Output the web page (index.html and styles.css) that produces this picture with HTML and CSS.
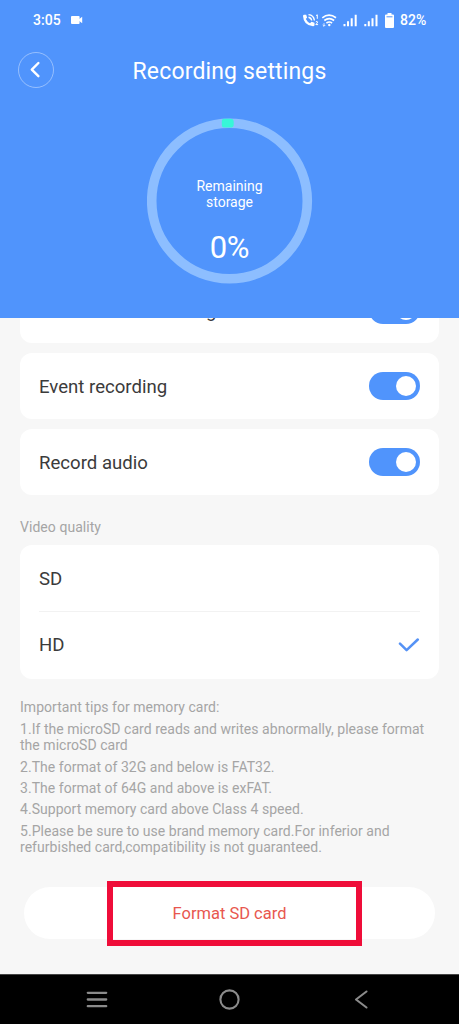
FILE: index.html
```html
<!DOCTYPE html>
<html lang="en">
<head>
<meta charset="utf-8">
<title>Recording settings</title>
<link rel="stylesheet" href="styles.css">
</head>
<body>
<div class="screen">
  <header class="header">
    <div class="status">
      <span class="clock">3:05</span>
      <svg class="cam" width="12" height="8" viewBox="0 0 12 8"><rect width="8.600" height="8" rx="1" fill="#fff"/><path d="M8 3.200L11.200 .8V7.200L8 4.800z" fill="#fff"/></svg>
      <svg class="signals" width="94" height="18" viewBox="0 0 94 18" fill="none" stroke="#fff">
        <path d="M1.900 3.700h2.300l.9 2.900-1.300 1.500q1.500 3 4.200 4.100l1.500-1.400 3 1v2.400q-.2 1.100-1.500 1.100Q1.500 14.300 1 5q0-1.100.9-1.300z" fill="#fff" stroke="none"/>
        <path d="M6.500 6.200q2.800.5 3.200 3.300M6.500 3.600q5.300.5 5.900 5.900" stroke-width="1.400"/>
        <path d="M14 4.600l1.300-.8v4M13.800 10.900q1.700-1.100 1.800.1 0 .8-1.800 2.600h2.300" stroke-width="1"/>
        <path d="M20.300 6.800q6.700-5.200 13.700 0M22.300 9.500q4.900-3.600 9.800 0M24.400 12.100q2.900-2.200 5.700 0" stroke-width="1.700"/>
        <circle cx="27.300" cy="14" r="1.200" fill="#fff" stroke="none"/>
        <path d="M22 12.200v3M20.700 14l1.300 1.300 1.300-1.300" stroke-width=".8"/>
        <path d="M42.500 15.300v-2.400M46 15.300v-5M49.700 15.300v-8M53.700 15.300V3.800M63.300 15.300v-2.400M66.800 15.300v-5M70.500 15.300v-8M74.500 15.300V3.800" stroke-width="2"/>
        <path d="M85.500 2h4v1.500h1.500q1 0 1 1V16q0 1-1 1h-7q-1 0-1-1V4.500q0-1 1-1h1.500z" fill="#fff" stroke="none"/>
        <path d="M84.500 5.800h6" stroke="#5094fc" stroke-width="1"/>
      </svg>
      <span class="battery">82%</span>
    </div>
    <div class="titlebar">
      <div class="back"><svg width="36" height="36" viewBox="0 0 36 36" fill="none" stroke="#fff"><circle cx="18" cy="18" r="17.500" stroke-opacity=".4"/><path d="M20.400 11L13.800 17.600l6.600 6.600" stroke-width="2.400" stroke-linecap="round" stroke-linejoin="round"/></svg></div>
      <h1 class="title">Recording settings</h1>
    </div>
    <div class="gauge">
      <svg class="ring" width="166" height="166" viewBox="0 0 166 166" fill="none"><circle cx="82.500" cy="83" r="77.800" stroke="#8dbeff" stroke-width="9.600"/><path d="M77 .8h6.700q3 0 3 3v3q0 2.800-3 2.800H77q-2.200 0-2.200-2.500V3.500q0-2.700 2.200-2.700z" fill="#37f6d8"/></svg>
      <div class="gauge-text">
        <div class="remaining">Remaining<br>storage</div>
        <div class="percent">0%</div>
      </div>
    </div>
  </header>
  <main class="content">
    <div class="cards">
      <div class="card"><span class="label">Continuous recording</span><span class="toggle"></span></div>
      <div class="card"><span class="label">Event recording</span><span class="toggle"></span></div>
      <div class="card"><span class="label">Record audio</span><span class="toggle"></span></div>
    </div>
    <h2 class="section">Video quality</h2>
    <div class="quality">
      <div class="option"><span class="label">SD</span></div>
      <div class="option"><span class="label">HD</span><svg width="22" height="14" viewBox="0 0 22 14" fill="none" stroke="#5592f5" stroke-width="2.500" stroke-linecap="round" stroke-linejoin="round"><path d="M2 5.700l6.600 6.500L19.800 1.500"/></svg></div>
    </div>
    <div class="tips">
      <p>Important tips for memory card:</p>
      <p>1.If the microSD card reads and writes abnormally, please format<br>the microSD card</p>
      <p>2.The format of 32G and below is FAT32.</p>
      <p>3.The format of 64G and above is exFAT.</p>
      <p>4.Support memory card above Class 4 speed.</p>
      <p>5.Please be sure to use brand memory card.For inferior and<br>refurbished card,compatibility is not guaranteed.</p>
    </div>
    <div class="format"><span>Format SD card</span><div class="highlight"></div></div>
  </main>
  <nav class="nav">
    <svg width="22" height="22" viewBox="0 0 22 22" stroke="#8b8b8b" stroke-width="2.300" stroke-linecap="round"><path d="M1.800 3.800h18.400M1.800 10.500h18.400M1.800 17.200h18.400"/></svg>
    <svg width="22" height="22" viewBox="0 0 22 22" fill="none" stroke="#8b8b8b" stroke-width="2.100"><circle cx="11.500" cy="10.500" r="9.100"/></svg>
    <svg width="22" height="22" viewBox="0 0 22 22" fill="none" stroke="#8b8b8b" stroke-width="2.100" stroke-linecap="round" stroke-linejoin="round"><path d="M16.500 2.500L6 10.500l10.500 8"/></svg>
  </nav>
</div>
</body>
</html>
```
FILE: styles.css
```css
* { box-sizing: border-box; margin: 0; padding: 0; }
body { font-family: Roboto, sans-serif; background: #f7f7f7; }
svg { display: block; flex: none; }
.screen { width: 459px; height: 1024px; display: flex; flex-direction: column; overflow: hidden; white-space: nowrap; }
.header { height: 318px; flex: none; background: #5094fc; color: #fff; display: flex; flex-direction: column; }
.status { height: 38px; padding: 1px 32px 0 33px; display: flex; align-items: center; font-size: 14px; font-weight: 500; }
.clock { width: 38px; letter-spacing: .05px; }
.signals { margin-left: auto; }
.battery { margin-left: 4px; width: 27px; }
.titlebar { height: 64px; padding: 14px 18px 0; display: grid; grid-template-columns: 36px 1fr 36px; align-items: start; }
.title { font-size: 23px; font-weight: 400; line-height: 28px; padding-top: 6px; text-align: center; letter-spacing: .15px; }
.gauge { margin: 16px auto 0; width: 166px; height: 166px; display: grid; }
.ring, .gauge-text { grid-area: 1 / 1; }
.gauge-text { padding-top: 60px; text-align: center; }
.remaining { font-size: 14px; line-height: 16.400px; }
.percent { font-size: 31px; line-height: 36px; margin-top: 19px; letter-spacing: -.3px; }
.content { height: 656px; flex: none; overflow: hidden; padding: 0 20px; }
.cards { margin-top: -41px; display: flex; flex-direction: column; gap: 9.400px; }
.card { height: 66.400px; flex: none; background: #fff; border-radius: 12px; padding: 0 19px; display: flex; align-items: center; justify-content: space-between; }
.label { font-size: 18.600px; line-height: 24px; color: #3b3b3b; padding-top: 2px; }
.toggle { width: 51px; height: 28px; border-radius: 14px; background: #5094fc; padding: 4px; display: flex; justify-content: flex-end; }
.toggle::before { content: ""; width: 20px; height: 20px; border-radius: 50%; background: #fff; }
.section { margin-top: 24px; font-size: 14px; font-weight: 400; line-height: 16px; color: #a5a5a5; letter-spacing: .05px; }
.quality { margin-top: 10px; height: 134px; background: #fff; border-radius: 12px; padding: 0 19px; }
.option { height: 66px; display: flex; align-items: center; justify-content: space-between; }
.option + .option { height: 68px; border-top: 1px solid #f2f2f2; }
.option + .option .label { padding-top: 0; }
.tips { margin-top: 20.500px; display: flex; flex-direction: column; gap: 5px; font-size: 14px; line-height: 16.400px; color: #a5a5a5; letter-spacing: .035px; }
.format { position: relative; margin: 31px 4px 0; height: 52px; border-radius: 26px; background: #fff; display: flex; align-items: center; justify-content: center; font-size: 16.500px; color: #e8574f; }
.format span { padding-top: 1px; }
.highlight { position: absolute; left: 83px; top: -6px; width: 255px; height: 65px; border: 6px solid #ef0d39; }
.nav { height: 50px; flex: none; background: #000; border-top: 1px solid #454545; padding: 0 87px 0 86px; display: flex; align-items: center; justify-content: space-between; }
```
